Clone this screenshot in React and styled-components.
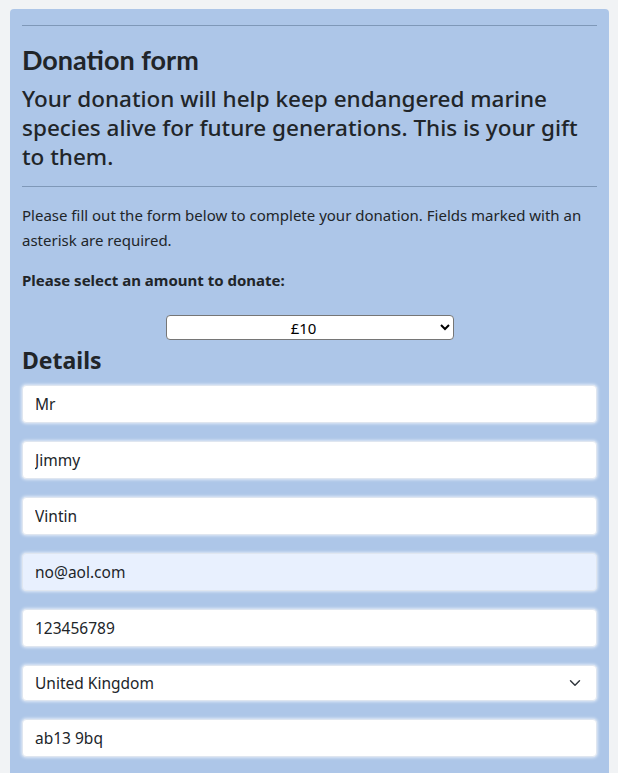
import React from "react";
import styled, { createGlobalStyle } from "styled-components";

const GlobalStyle = createGlobalStyle`
  html, body {
    margin: 0;
    padding: 0;
    background: #f1f3f5;
  }
  body {
    font-family: "Noto Sans", "Open Sans", sans-serif;
    color: #212529;
  }
`;

const Page = styled.div`
  padding: 9px 9px 0 10px;
`;

const Card = styled.div`
  background: #adc6e8;
  border-radius: 4px 4px 0 0;
  padding: 16px 12px 20px 12px;
  width: 575px;
`;

const Rule = styled.hr`
  border: 0;
  border-top: 1px solid #7f98b8;
  margin: ${(p) => p.$margin || "0"};
`;

const Title = styled.h1`
  font-family: "Lato", "Noto Sans", sans-serif;
  font-weight: 700;
  font-size: 27px;
  line-height: 32px;
  margin: 18px 0 8px 0;
`;

const Subtitle = styled.h2`
  font-family: "Noto Sans", sans-serif;
  font-weight: 500;
  font-size: 22.5px;
  line-height: 29px;
  margin: 0 0 15px 0;
`;

const Intro = styled.p`
  font-size: 15px;
  line-height: 25px;
  margin: 0 0 16px 0;
`;

const Prompt = styled.p`
  font-size: 15px;
  font-weight: 700;
  line-height: 22px;
  margin: 0;
`;

const AmountRow = styled.div`
  display: flex;
  justify-content: center;
  margin-top: 24px;
`;

const AmountSelect = styled.select`
  width: 288px;
  height: 25px;
  border: 1px solid #767676;
  border-radius: 4px;
  background: #fff;
  font-family: "Noto Sans", sans-serif;
  font-size: 15px;
  text-align: center;
  text-align-last: center;
  color: #000;
`;

const SectionTitle = styled.h3`
  font-weight: 700;
  font-size: 23px;
  line-height: 30px;
  margin: 5px 0 10px 0;
`;

const Fields = styled.div`
  display: flex;
  flex-direction: column;
  gap: 18px;
`;

const Field = styled.input`
  box-sizing: border-box;
  width: 575px;
  height: 38px;
  border: 1px solid #dfe6f0;
  border-radius: 4px;
  background: ${(p) => (p.$filled ? "#e8f0fe" : "#fff")};
  box-shadow: 0 0 3px 1px rgba(255, 255, 255, 0.6);
  padding: 0 12px;
  font-family: "Noto Sans", sans-serif;
  font-size: 15.5px;
  color: #212529;
  outline: none;
`;

const CountrySelect = styled.select`
  box-sizing: border-box;
  width: 575px;
  height: 36px;
  border: 1px solid #dfe6f0;
  border-radius: 4px;
  background-color: #fff;
  box-shadow: 0 0 3px 1px rgba(255, 255, 255, 0.6);
  padding: 0 12px;
  font-family: "Noto Sans", sans-serif;
  font-size: 15.5px;
  color: #212529;
  appearance: none;
  background-image: url("data:image/svg+xml,%3csvg xmlns='http://www.w3.org/2000/svg' viewBox='0 0 16 16'%3e%3cpath fill='none' stroke='%23343a40' stroke-linecap='round' stroke-linejoin='round' stroke-width='2' d='M2 5l6 6 6-6'/%3e%3c/svg%3e");
  background-repeat: no-repeat;
  background-position: right 14px center;
  background-size: 14px 12px;
`;

export default function App() {
  return (
    <>
      <GlobalStyle />
      <Page>
        <Card>
          <Rule />
          <Title>Donation form</Title>
          <Subtitle>
            Your donation will help keep endangered marine species alive for
            future generations. This is your gift to them.
          </Subtitle>
          <Rule $margin="0 0 16px 0" />
          <Intro>
            Please fill out the form below to complete your donation. Fields
            marked with an asterisk are required.
          </Intro>
          <Prompt>Please select an amount to donate:</Prompt>
          <AmountRow>
            <AmountSelect defaultValue="10">
              <option value="10">£10</option>
              <option value="20">£20</option>
              <option value="50">£50</option>
            </AmountSelect>
          </AmountRow>
          <SectionTitle>Details</SectionTitle>
          <Fields>
            <Field defaultValue="Mr" />
            <Field defaultValue="Jimmy" />
            <Field defaultValue="Vintin" />
            <Field defaultValue="no@aol.com" $filled />
            <Field defaultValue="123456789" />
            <CountrySelect defaultValue="uk">
              <option value="uk">United Kingdom</option>
            </CountrySelect>
            <Field defaultValue="ab13 9bq" />
          </Fields>
        </Card>
      </Page>
    </>
  );
}
